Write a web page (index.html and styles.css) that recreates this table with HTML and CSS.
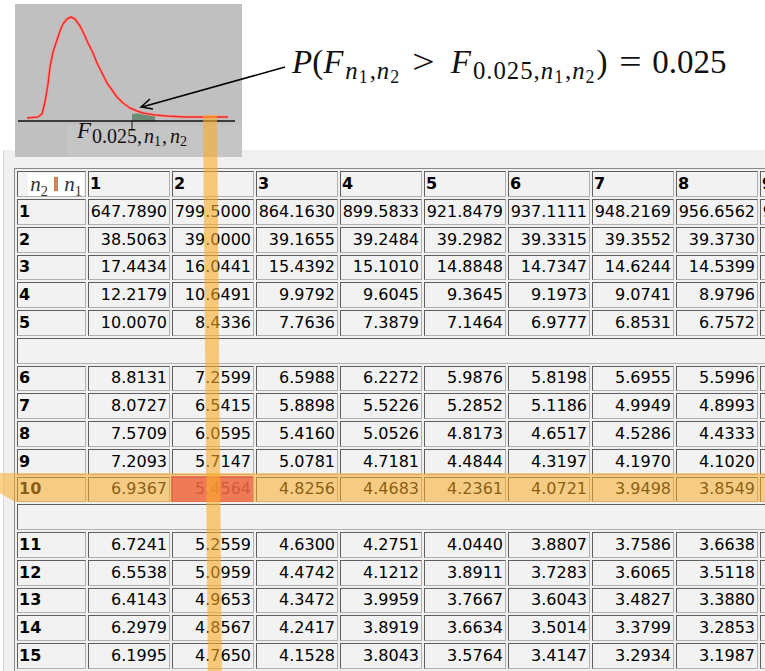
FILE: index.html
```html
<!DOCTYPE html>
<html lang="en">
<head>
  <meta charset="UTF-8" />
  <meta name="viewport" content="width=device-width, initial-scale=1.0"/>
  <title>F distribution table, alpha = 0.025</title>
  <link rel="stylesheet" href="styles.css">
</head>
<body>
  <div class="page">
    <div class="figure">
      <div class="plot">
        <svg width="227" height="153" viewBox="0 0 227 153">
          <rect x="0" y="0" width="227" height="153" fill="#c0c0c0"/>
          <rect x="52" y="121" width="175" height="32" fill="#c5c5c5"/>
          <polygon points="117,110 128,109 140,111 140,117 117,117" fill="#6c8c76"/>
          <polyline points="12,114 23,113 27,110 30,98 33,80 35,63 38,48 42,36 45,27 48,20 52,15 56,13 60,15 65,22 69,30 73,39 78,49 82,59 87,69 92,79 97,86 102,93 108,99 115,104 122,107 128,109 140,111 152,112 170,113 213,113"
            fill="none" stroke="#f59a9a" stroke-width="3.2" stroke-linejoin="round"/>
          <polyline points="12,114 23,113 27,110 30,98 33,80 35,63 38,48 42,36 45,27 48,20 52,15 56,13 60,15 65,22 69,30 73,39 78,49 82,59 87,69 92,79 97,86 102,93 108,99 115,104 122,107 128,109 140,111 152,112 170,113 213,113"
            fill="none" stroke="#e5302c" stroke-width="1.5" stroke-linejoin="round"/>
          <line x1="3" y1="117" x2="220" y2="117" stroke="#111" stroke-width="1.4"/>
          <line x1="117" y1="117" x2="117" y2="126" stroke="#111" stroke-width="1"/>
          <text class="plot-label" x="62" y="134"><tspan class="mi" font-size="23">F</tspan><tspan dx="1" dy="5" font-size="20">0.025,</tspan><tspan class="mi" dx="2" font-size="20">n</tspan><tspan dy="3" font-size="14">1</tspan><tspan dx="1" dy="-3" font-size="20">,</tspan><tspan class="mi" dx="3" font-size="20">n</tspan><tspan dy="3" font-size="14">2</tspan></text>
        </svg>
      </div>
      <p class="formula"><i>P</i>(<i>F</i><sub><i>n</i><sub>1</sub>,<i>n</i><sub>2</sub></sub><span class="rel rel-gt">&gt;</span><i>F</i><sub>0.025,<i>n</i><sub>1</sub>,<i>n</i><sub>2</sub></sub>)<span class="rel rel-eq">=</span>0.025</p>
      <svg class="arrow" width="765" height="160" viewBox="0 0 765 160">
        <line x1="285" y1="67" x2="142" y2="107" stroke="#000" stroke-width="1.5"/>
        <polyline points="150,99 141,107 153,109" fill="none" stroke="#000" stroke-width="1.5"/>
      </svg>
    </div>

    <div class="panel">
      <table class="ftable">
        <tr>
          <th class="corner"><span class="corner-math"><i>n</i><sub>2</sub> &#8214; <i>n</i><sub>1</sub></span></th>
          <th>1</th><th>2</th><th>3</th><th>4</th><th>5</th><th>6</th><th>7</th><th>8</th><th>9</th>
        </tr>
        <tr><th>1</th><td>647.7890</td><td>799.5000</td><td>864.1630</td><td>899.5833</td><td>921.8479</td><td>937.1111</td><td>948.2169</td><td>956.6562</td><td>963.2846</td></tr>
        <tr><th>2</th><td>38.5063</td><td>39.0000</td><td>39.1655</td><td>39.2484</td><td>39.2982</td><td>39.3315</td><td>39.3552</td><td>39.3730</td><td>39.3869</td></tr>
        <tr><th>3</th><td>17.4434</td><td>16.0441</td><td>15.4392</td><td>15.1010</td><td>14.8848</td><td>14.7347</td><td>14.6244</td><td>14.5399</td><td>14.4731</td></tr>
        <tr><th>4</th><td>12.2179</td><td>10.6491</td><td>9.9792</td><td>9.6045</td><td>9.3645</td><td>9.1973</td><td>9.0741</td><td>8.9796</td><td>8.9047</td></tr>
        <tr><th>5</th><td>10.0070</td><td>8.4336</td><td>7.7636</td><td>7.3879</td><td>7.1464</td><td>6.9777</td><td>6.8531</td><td>6.7572</td><td>6.6811</td></tr>
        <tr class="gap"><td colspan="10"></td></tr>
        <tr><th>6</th><td>8.8131</td><td>7.2599</td><td>6.5988</td><td>6.2272</td><td>5.9876</td><td>5.8198</td><td>5.6955</td><td>5.5996</td><td>5.5234</td></tr>
        <tr><th>7</th><td>8.0727</td><td>6.5415</td><td>5.8898</td><td>5.5226</td><td>5.2852</td><td>5.1186</td><td>4.9949</td><td>4.8993</td><td>4.8232</td></tr>
        <tr><th>8</th><td>7.5709</td><td>6.0595</td><td>5.4160</td><td>5.0526</td><td>4.8173</td><td>4.6517</td><td>4.5286</td><td>4.4333</td><td>4.3572</td></tr>
        <tr><th>9</th><td>7.2093</td><td>5.7147</td><td>5.0781</td><td>4.7181</td><td>4.4844</td><td>4.3197</td><td>4.1970</td><td>4.1020</td><td>4.0260</td></tr>
        <tr><th>10</th><td>6.9367</td><td>5.4564</td><td>4.8256</td><td>4.4683</td><td>4.2361</td><td>4.0721</td><td>3.9498</td><td>3.8549</td><td>3.7790</td></tr>
        <tr class="gap"><td colspan="10"></td></tr>
        <tr><th>11</th><td>6.7241</td><td>5.2559</td><td>4.6300</td><td>4.2751</td><td>4.0440</td><td>3.8807</td><td>3.7586</td><td>3.6638</td><td>3.5879</td></tr>
        <tr><th>12</th><td>6.5538</td><td>5.0959</td><td>4.4742</td><td>4.1212</td><td>3.8911</td><td>3.7283</td><td>3.6065</td><td>3.5118</td><td>3.4358</td></tr>
        <tr><th>13</th><td>6.4143</td><td>4.9653</td><td>4.3472</td><td>3.9959</td><td>3.7667</td><td>3.6043</td><td>3.4827</td><td>3.3880</td><td>3.3120</td></tr>
        <tr><th>14</th><td>6.2979</td><td>4.8567</td><td>4.2417</td><td>3.8919</td><td>3.6634</td><td>3.5014</td><td>3.3799</td><td>3.2853</td><td>3.2093</td></tr>
        <tr><th>15</th><td>6.1995</td><td>4.7650</td><td>4.1528</td><td>3.8043</td><td>3.5764</td><td>3.4147</td><td>3.2934</td><td>3.1987</td><td>3.1227</td></tr>
        <tr><th>16</th><td>6.1151</td><td>4.6867</td><td>4.0768</td><td>3.7294</td><td>3.5021</td><td>3.3406</td><td>3.2194</td><td>3.1248</td><td>3.0488</td></tr>
      </table>
    </div>

    <!-- highlighter marks drawn over the table -->
    <div class="mark mark-row"></div>
    <div class="mark mark-cell"></div>
    <div class="mark mark-col"></div>
  </div>
</body>
</html>
```

FILE: styles.css
```css
body {
  margin: 0;
  background: #fff;
  font-family: "DejaVu Sans", Verdana, sans-serif;
}

.page {
  position: relative;
  width: 765px;
  height: 671px;
  overflow: hidden;
  display: flex;
  flex-direction: column;
}

.figure {
  position: relative;
  height: 150px;
  flex: none;
  display: flex;
  align-items: flex-start;
}

.plot {
  position: relative;
  z-index: 1;
  margin: 4px 0 0 15px;
  width: 227px;
  height: 153px;
}

.plot svg {
  display: block;
}

.plot-label {
  font-family: "Liberation Serif", "Times New Roman", serif;
  fill: #111;
}

.plot-label .mi {
  font-style: italic;
}

.formula {
  margin: 44px 0 0 50px;
  font-family: "Liberation Serif", "Times New Roman", serif;
  font-size: 33px;
  line-height: 36px;
  color: #111;
  white-space: nowrap;
}

.formula sub {
  margin-left: 2px;
  font-size: 0.75em;
  line-height: 0;
  vertical-align: -0.24em;
  letter-spacing: 1px;
}

.formula sub sub {
  margin-left: 0;
  font-size: 0.72em;
  vertical-align: -0.2em;
  letter-spacing: 2px;
}

.formula .rel {
  display: inline-block;
  transform: scaleX(1.2);
}

.formula .rel-gt {
  margin: 0 18px 0 13px;
}

.formula .rel-eq {
  margin: 0 13px 0 13px;
}

.arrow {
  position: absolute;
  left: 0;
  top: 0;
  z-index: 2;
  pointer-events: none;
}

.panel {
  flex: 1;
  margin-left: 3px;
  border-left: 1px solid #d9d9d9;
  background: #f0f0f0;
  padding: 18px 0 0 10px;
  overflow: hidden;
}

.ftable {
  border-collapse: separate;
  border-spacing: 2px;
  border: 1px solid;
  border-color: #8a8a8a #bdbdbd #bdbdbd #8a8a8a;
  font-size: 16px;
  color: #000;
}

.ftable th,
.ftable td {
  box-sizing: border-box;
  height: 25.76px;
  padding: 0 2px 0 1px;
  border: 1px solid;
  border-color: #5e5e5e #b0b0b0 #b0b0b0 #5e5e5e;
  background: #f2f2f2;
  line-height: 20px;
  white-space: nowrap;
}

.ftable td {
  width: 82px;
  min-width: 82px;
  text-align: right;
}

.ftable th {
  width: 82px;
  min-width: 82px;
  text-align: left;
  font-weight: bold;
}

.ftable tr > th:first-child {
  width: 69px;
  min-width: 69px;
  max-width: 69px;
}

.ftable th.corner {
  padding: 1px 1px 0 1px;
}

.corner-math {
  display: block;
  margin-left: 9px;
  background: #fff;
  font-family: "Liberation Serif", "Times New Roman", serif;
  font-weight: normal;
  font-size: 21px;
  line-height: 23px;
  color: #333;
  text-align: center;
}

.corner-math sub {
  font-size: 0.68em;
  line-height: 0;
}

.ftable .gap td {
  width: auto;
  min-width: 0;
}

.mark {
  position: absolute;
  pointer-events: none;
}

.mark-row {
  left: 0;
  top: 473px;
  width: 765px;
  height: 29px;
  z-index: 3;
  background: rgba(250, 172, 40, 0.55);
  clip-path: polygon(0 0, 100% 0, 100% 100%, 2% 100%, 0 70%);
}

.mark-cell {
  left: 171px;
  top: 476px;
  width: 82px;
  height: 26px;
  z-index: 4;
  background: rgba(236, 90, 70, 0.72);
}

.mark-col {
  left: 203px;
  top: 115px;
  width: 14px;
  height: 560px;
  z-index: 5;
  background: rgba(250, 172, 40, 0.6);
  transform: rotate(-0.5deg);
  transform-origin: top left;
}
```
